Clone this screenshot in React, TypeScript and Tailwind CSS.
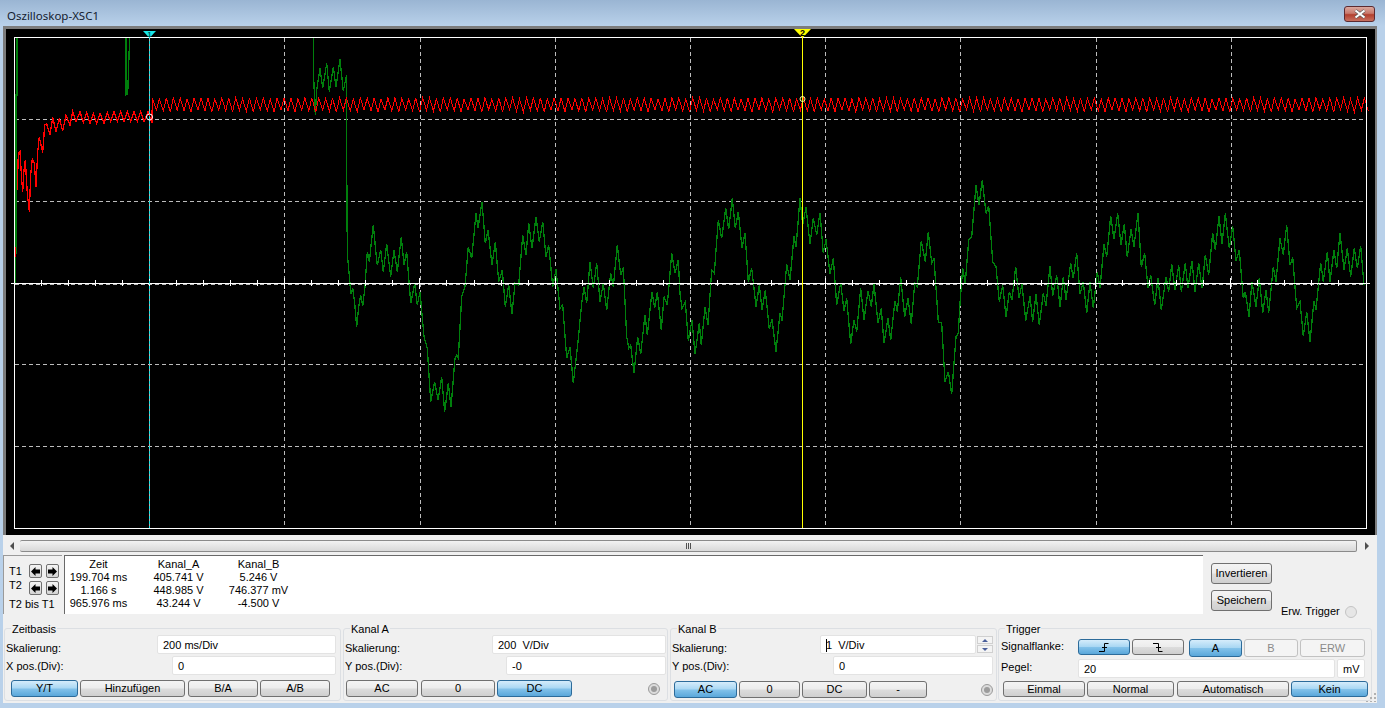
import type { ReactNode } from "react";

// Traced from the reference: "x,y" in 3x crop space, shifted back to page pixels.
function trace(src: string, ox: number, oy: number) {
  return src
    .trim()
    .split(/\s+/)
    .map((p) => {
      const [x, y] = p.split(",").map(Number);
      return `${(ox + x / 3).toFixed(1)},${(oy + y / 3).toFixed(1)}`;
    })
    .join(" ");
}

const greenStart = trace("51,112 51,285 48,285 48,740 46,850", 0, 0);
const greenBump = trace("378,112 378,285 383,282 388,140 388,112", 0, 0);
const greenMain = [
  trace("940,112 940,205 946,345 950,270 960,205 968,265 980,190 988,275 1000,200 1008,262 1020,178 1030,272 1040,225 1040,480 1042,760", 0, 0),
  trace("30,340 32,372 38,355 44,400 50,470 56,410 62,375 68,408 75,350 82,245 88,275 100,165 108,250 112,285 122,240 130,305 140,222 152,320 162,240 172,305 184,200 192,285 200,245 212,400 224,340 232,405 240,365 252,500 262,535 272,695 284,635 294,690 305,622 314,725 325,640 333,712 345,565 350,555 355,565 365,380 375,350 385,230 395,265 408,130 414,175 426,95 436,220 444,180 456,285 466,215 476,335 487,300 496,410 506,345 516,432 525,340 536,345 548,195 558,255 566,160 576,235 588,140 598,215 608,155 618,260 626,225 638,350 648,298 660,415 668,405 680,565 690,530 700,640 714,515 725,400 732,350 740,400 750,275 760,355 770,280 780,395 790,340 800,420 812,310 820,350 832,225 842,315 850,292 860,500 866,535 872,525 882,610 893,500 902,552 915,435 922,495 936,365 944,415 952,365 964,480 972,380 982,405 995,250 1005,310 1015,270", 340, 170),
  trace("0,370 6,415 16,395 25,512 36,450 45,552 58,460 64,525 75,412 84,465 95,300 103,310 115,150 125,205 137,115 146,178 157,85 166,175 175,125 186,235 195,188 205,335 215,295 228,410 238,345 246,420 256,360 268,478 276,447 288,545 300,428 306,452 320,282 330,330 342,198 348,232 360,85 368,165 378,112 390,222 400,145 410,195 420,128 430,250 438,208 450,312 460,265 470,405 482,338 492,422 500,385 512,522 522,450 530,485 542,355 552,450 564,362 574,410 582,342 594,460 604,415 612,520 624,445 632,510 645,392 652,425 662,322 674,440 684,385 694,462 704,340 712,350 724,212 736,275 745,185 755,280 762,265 775,455 785,460 795,635 805,605 815,672 828,500 835,490 840,400 848,295 856,340 866,210 875,200 888,45 897,105 907,30 918,130 926,108 938,275 948,290 958,395 968,345 978,442 988,365 996,390 1007,290 1017,385", 680, 170),
  trace("6,342 17,452 30,378 38,455 48,372 58,465 70,370 78,408 90,288 98,378 110,315 120,412 130,322 138,390 152,278 160,325 170,248 180,372 190,335 200,430 210,335 220,415 232,305 240,355 252,222 260,260 272,138 282,208 293,130 303,225 313,162 322,262 333,178 342,230 354,128 364,290 374,250 384,355 392,315 404,405 414,325 424,420 438,320 446,365 455,283 465,360 476,285 484,365 496,280 504,355 516,272 525,365 536,280 546,355 556,255 566,315 578,188 586,240 597,138 606,222 616,130 628,235 638,168 648,272 658,240 670,385 676,365 687,440 696,335 708,410 718,325 728,428 738,360 746,428 760,290 768,335 780,205 790,255 800,165 810,285 818,262 830,415 840,395 850,498 860,425 870,515 882,392 888,420 902,278 910,335 922,245 930,335 942,240 950,295 960,188 972,300 982,235 992,320 1003,235 1012,295 1022,228 1032,345", 1020, 170),
].join(" ");

const redStart = trace(
  "52,570 55,460 60,455 65,540 68,575 72,510 76,480 82,580 88,635 92,525 97,475 103,490 108,560 113,455 118,412 128,458 134,375 140,372 150,405 158,352 168,395 178,355 188,393 198,345 210,375 218,335 228,365 240,335 250,368 260,338 270,370 280,340 290,370 300,340 312,370 322,338 332,365 342,335 352,365 362,335 372,365 382,335 392,365 402,335 412,365 422,335 432,365 444,335 456,370 457,300",
  0,
  0,
);

// steady ripple once the red trace has settled
const redRipple: string[] = [];
for (let i = 0; i < 176; i++) {
  const x = 152.5 + i * 6.925;
  if (x > 1365) break;
  redRipple.push(`${x.toFixed(1)},${98 + (i % 4 === 1 ? 1 : 0)}`);
  redRipple.push(`${(x + 3.9).toFixed(1)},${110 + (i % 3)}`);
}

const gridX = [284.9, 420, 555.2, 690.4, 825.6, 960.7, 1096, 1231];
const gridY = [119.5, 201.5, 364.5, 446.5];
const tickX: number[] = [];
for (let i = 0; i <= 50; i++) tickX.push(14.5 + i * 27.03);

function Plot() {
  return (
    <svg viewBox="6 29 1369 506" width={1369} height={506} className="block bg-black">
      <g stroke="#bcbcbc" strokeWidth={1} strokeDasharray="4 3" shapeRendering="crispEdges">
        {gridX.map((x) => (
          <line key={x} x1={x} x2={x} y1={38} y2={528} />
        ))}
        {gridY.map((y) => (
          <line key={y} x1={15} x2={1366} y1={y} y2={y} />
        ))}
        <line x1={15} x2={1366} y1={284.5} y2={284.5} />
      </g>
      <line x1={149.5} x2={149.5} y1={38} y2={528} stroke="#c9a6a6" strokeWidth={1} shapeRendering="crispEdges" />
      <g fill="none" stroke="#007f0c" strokeWidth={1.3} shapeRendering="crispEdges">
        <polyline points={greenStart} />
        <polyline points={greenBump} />
        <polyline points={greenMain} />
      </g>
      <g fill="none" stroke="#ff0000" shapeRendering="crispEdges">
        <line x1={15.5} x2={15.5} y1={247} y2={257} />
        <polyline points={redStart} strokeWidth={1.3} />
        <polyline points={redRipple.join(" ")} strokeWidth={1} />
      </g>
      <g stroke="#ffffff" shapeRendering="crispEdges" fill="none">
        <rect x={14.5} y={37.5} width={1351.5} height={490.5} />
        <line x1={11} x2={1370} y1={283.5} y2={283.5} strokeWidth={1.5} />
        {tickX.map((x, i) => (
          <line key={x} x1={x} x2={x} y1={i % 5 === 0 ? 278 : 280} y2={i % 5 === 0 ? 289 : 286} />
        ))}
      </g>
      <line x1={149.5} x2={149.5} y1={36} y2={528} stroke="#19e6e6" strokeWidth={1} strokeDasharray="3 2" shapeRendering="crispEdges" />
      <line x1={802.5} x2={802.5} y1={36} y2={528} stroke="#ffff00" strokeWidth={1} shapeRendering="crispEdges" />
      <circle cx={149.5} cy={117} r={3} fill="none" stroke="#ffffff" />
      <circle cx={802.5} cy={99} r={2.5} fill="none" stroke="#ffff99" strokeWidth={1} />
      <polygon points="143,31 156,31 149.5,38" fill="#19e6e6" />
      <polygon points="794,29 811,29 802.5,38" fill="#ffff00" />
      <text x={149.5} y={36.5} textAnchor="middle" fontSize={7} fontWeight={700} fontFamily="Liberation Sans" fill="#004a4a">1</text>
      <text x={802.5} y={36} textAnchor="middle" fontSize={9} fontWeight={700} fontFamily="Liberation Sans" fill="#000000">2</text>
    </svg>
  );
}

const btnBase =
  "flex shrink-0 items-center justify-center rounded-[3px] border border-[#707070] text-[11px] leading-none text-black bg-[linear-gradient(#f4f4f4_0%,#ececec_48%,#dcdcdc_52%,#cfcfcf_100%)]";
const btnActive =
  "flex shrink-0 items-center justify-center rounded-[3px] border border-[#2c6b9a] text-[11px] leading-none text-black bg-[linear-gradient(#d5ecfb_0%,#a9d7f3_48%,#83c2ea_52%,#5aa7da_100%)]";
const btnOff =
  "flex shrink-0 items-center justify-center rounded-[3px] border border-[#c2c2c2] text-[11px] leading-none text-[#8a8a8a] bg-[#f4f4f4]";

function Btn({ className, active, off, children }: { className: string; active?: boolean; off?: boolean; children?: ReactNode }) {
  return <button className={`${active ? btnActive : off ? btnOff : btnBase} ${className}`}>{children}</button>;
}

function Field({ className, children }: { className: string; children?: ReactNode }) {
  return (
    <div className={`flex items-center rounded-[2px] border border-[#e3e3e3] bg-white pl-[5px] pt-[1px] text-[11px] ${className}`}>
      {children}
    </div>
  );
}

function Led({ className }: { className: string }) {
  return (
    <span className={`flex size-[12px] items-center justify-center rounded-full border border-[#9a9a9a] bg-[#dcdcdc] ${className}`}>
      <span className="size-[6px] rounded-full bg-[#9c9c9c]" />
    </span>
  );
}

function Group({ title, className, children }: { title: string; className: string; children: ReactNode }) {
  return (
    <fieldset className={`h-[79px] shrink-0 rounded-[3px] border border-[#dcdfe3] ${className}`}>
      <legend className="ml-[6px] translate-y-[1px] px-[1px] text-[11px] leading-[13px]">{title}</legend>
      {children}
    </fieldset>
  );
}

function NavBtn({ left }: { left?: boolean }) {
  return (
    <button className="flex h-[14px] w-[13px] items-center justify-center rounded-[2px] border border-[#707070] bg-[linear-gradient(#f4f4f4,#d4d4d4)]">
      <svg viewBox="0 0 9 9" width={9} height={9}>
        <path d={left ? "M0 4.5 4.5 0V2.5H9V6.5H4.5V9Z" : "M9 4.5 4.5 0V2.5H0V6.5H4.5V9Z"} fill="#000000" />
      </svg>
    </button>
  );
}

const readings = [
  ["Zeit", "Kanal_A", "Kanal_B"],
  ["199.704 ms", "405.741 V", "5.246 V"],
  ["1.166 s", "448.985 V", "746.377 mV"],
  ["965.976 ms", "43.244 V", "-4.500 V"],
];

export default function App() {
  return (
    <div className="relative flex h-[708px] w-[1385px] flex-col overflow-hidden bg-[#b9d1ea] font-['Liberation_Sans',sans-serif] text-[11px] text-black">
      {/* title bar */}
      <div className="flex h-[26px] shrink-0 items-start bg-[linear-gradient(#9ab5d3,#b9d1ea)] pl-[7px] pr-[10px]">
        <span className="mt-[8px] font-['Noto_Sans',sans-serif] text-[11.5px] leading-[15px] text-[#14202e]">Oszilloskop-XSC1</span>
        <button className="ml-auto mt-[6px] flex h-[16px] w-[31px] items-center justify-center rounded-[3px] border border-[#5c2a30] bg-[linear-gradient(#dba89f_0%,#c97a6d_45%,#b2402f_55%,#c8705f_100%)]">
          <svg viewBox="0 0 12 10" width={12} height={10}>
            <path d="M1.5 1.5 10.5 8.5M10.5 1.5 1.5 8.5" stroke="#555555" strokeWidth={3.4} />
            <path d="M1.5 1.5 10.5 8.5M10.5 1.5 1.5 8.5" stroke="#ffffff" strokeWidth={2.2} />
          </svg>
        </button>
      </div>

      <div className="ml-[3px] flex h-[677px] w-[1374px] shrink-0 flex-col bg-[#f0f0f0]">
        {/* scope screen */}
        <div className="border-l-[3px] border-r-[2px] border-t-[3px] border-[#7c7c7c]">
          <Plot />
        </div>

        {/* scroll bar */}
        <div className="mt-[5px] flex h-[12px] items-stretch">
          <div className="flex w-[17px] items-center justify-center">
            <span className="size-0 border-y-[4px] border-r-[4px] border-y-transparent border-r-[#505050]" />
          </div>
          <div className="flex w-[1337px] items-center justify-center gap-[1px] rounded-[2px] border-y border-r border-[#8a8a8a] bg-[linear-gradient(#f2f2f2,#d8d8d8)]">
            <span className="h-[6px] w-[1px] bg-[#505050]" />
            <span className="h-[6px] w-[1px] bg-[#505050]" />
            <span className="h-[6px] w-[1px] bg-[#505050]" />
          </div>
          <div className="flex w-[20px] items-center justify-center">
            <span className="size-0 border-y-[4px] border-l-[4px] border-y-transparent border-l-[#505050]" />
          </div>
        </div>

        {/* cursor readout */}
        <div className="mt-[3px] flex h-[59px]">
          <div className="flex w-[59px] flex-col border-l border-t border-[#9a9a9a] border-b-[#d8d8d8] border-r-[#d8d8d8] pl-[5px] pt-[8px]">
            <div className="flex h-[14px] items-center">
              <span className="w-[20px]">T1</span>
              <div className="flex gap-[4px]">
                <NavBtn left />
                <NavBtn />
              </div>
            </div>
            <div className="mt-[3px] flex h-[14px] items-center">
              <span className="mb-[5px] w-[20px]">T2</span>
              <div className="flex gap-[4px]">
                <NavBtn left />
                <NavBtn />
              </div>
            </div>
            <span className="mt-[3px] leading-[13px]">T2 bis T1</span>
          </div>

          <div className="ml-[2px] h-[59px] w-[1139px] border-l border-t border-[#696969] bg-white pt-[2px]">
            <div className="grid grid-cols-[67px_93px_67px] text-center leading-[13px]">
              {readings.flat().map((t, i) => (
                <span key={i}>{t}</span>
              ))}
            </div>
          </div>

          <div className="ml-[8px] flex w-[61px] flex-col gap-[6px] pt-[8px]">
            <Btn className="h-[21px] w-[61px]">Invertieren</Btn>
            <Btn className="h-[21px] w-[61px]">Speichern</Btn>
          </div>
          <div className="-mb-[4px] ml-[9px] flex items-end gap-[5px]">
            <span className="leading-[13px]">Erw. Trigger</span>
            <span className="size-[12px] rounded-full border border-[#c4c4c4] bg-[#e6e6e6]" />
          </div>
        </div>

        {/* settings */}
        <div className="mt-[8px] flex pl-[1px]">
          <Group title="Zeitbasis" className="w-[337px]">
            <div className="flex h-[19px] items-start pl-[1px] pr-[4px]">
              <span className="mt-[5px]">Skalierung:</span>
              <Field className="ml-auto h-[19px] w-[179px]">200 ms/Div</Field>
            </div>
            <div className="mt-[2px] flex h-[19px] items-center pl-[1px] pr-[4px]">
              <span className="mt-[1px]">X pos.(Div):</span>
              <Field className="ml-auto h-[19px] w-[164px]">0</Field>
            </div>
            <div className="mt-[5px] flex pl-[6px]">
              <Btn active className="h-[17px] w-[67px]">Y/T</Btn>
              <Btn className="ml-[2px] h-[17px] w-[105px]">Hinzufügen</Btn>
              <Btn className="ml-[3px] h-[17px] w-[70px]">B/A</Btn>
              <Btn className="ml-[2px] h-[17px] w-[70px]">A/B</Btn>
            </div>
          </Group>

          <Group title="Kanal A" className="ml-[2px] w-[325px]">
            <div className="flex h-[19px] items-start pl-[1px] pr-[1px]">
              <span className="mt-[5px]">Skalierung:</span>
              <Field className="ml-auto h-[19px] w-[174px]">200&nbsp; V/Div</Field>
            </div>
            <div className="mt-[2px] flex h-[19px] items-center pl-[1px] pr-[1px]">
              <span className="mt-[1px]">Y pos.(Div):</span>
              <Field className="ml-auto h-[19px] w-[160px]">-0</Field>
            </div>
            <div className="mt-[5px] flex items-center pl-[2px]">
              <Btn className="h-[17px] w-[72px]">AC</Btn>
              <Btn className="ml-[3px] h-[17px] w-[74px]">0</Btn>
              <Btn active className="ml-[2px] h-[17px] w-[75px]">DC</Btn>
              <Led className="ml-[76px]" />
            </div>
          </Group>

          <Group title="Kanal B" className="ml-[2px] w-[327px]">
            <div className="flex h-[19px] items-start pl-[1px] pr-[3px]">
              <span className="mt-[5px]">Skalierung:</span>
              <div className="ml-auto flex items-center gap-[1px]">
                <Field className="h-[19px] w-[156px] border-[#7eb4ea]">
                  <span className="mr-[-1px] h-[13px] w-[1px] bg-black" />
                  1&nbsp; V/Div
                </Field>
                <div className="flex w-[16px] flex-col gap-[1px]">
                  <span className="flex h-[8px] items-center justify-center border border-[#d0d0d0] bg-[#f4f4f4]">
                    <span className="size-0 border-x-[3px] border-b-[3px] border-x-transparent border-b-[#4a5f9a]" />
                  </span>
                  <span className="flex h-[8px] items-center justify-center border border-[#d0d0d0] bg-[#f4f4f4]">
                    <span className="size-0 border-x-[3px] border-t-[3px] border-x-transparent border-t-[#4a5f9a]" />
                  </span>
                </div>
              </div>
            </div>
            <div className="mt-[2px] flex h-[19px] items-center pl-[1px] pr-[3px]">
              <span className="mt-[1px]">Y pos.(Div):</span>
              <Field className="ml-auto h-[19px] w-[160px]">0</Field>
            </div>
            <div className="mt-[6px] flex items-center pl-[3px]">
              <Btn active className="h-[17px] w-[63px]">AC</Btn>
              <Btn className="ml-[2px] h-[17px] w-[61px]">0</Btn>
              <Btn className="ml-[2px] h-[17px] w-[65px]">DC</Btn>
              <Btn className="ml-[2px] h-[17px] w-[58px]">-</Btn>
              <Led className="ml-[54px]" />
            </div>
          </Group>

          <Group title="Trigger" className="ml-[1px] w-[374px]">
            <div className="flex items-start pl-[2px] pt-[4px]">
              <span className="mt-[1px] w-[77px] leading-[13px]">Signalflanke:</span>
              <Btn active className="h-[16px] w-[52px]">
                <svg viewBox="0 0 10 9" width={10} height={9}>
                  <path d="M0 8.5H5.5V.5H9.5M3 4.5H8" fill="none" stroke="#000000" />
                </svg>
              </Btn>
              <Btn className="ml-[2px] h-[16px] w-[52px]">
                <svg viewBox="0 0 10 9" width={10} height={9}>
                  <path d="M0 .5H5.5V8.5H9.5M3 4.5H8" fill="none" stroke="#000000" />
                </svg>
              </Btn>
              <Btn active className="ml-[5px] h-[18px] w-[53px]">A</Btn>
              <Btn off className="ml-[2px] h-[18px] w-[54px]">B</Btn>
              <Btn off className="ml-[2px] h-[18px] w-[65px]">ERW</Btn>
            </div>
            <div className="mt-[2px] flex h-[19px] items-center pl-[2px]">
              <span className="mb-[3px] w-[77px]">Pegel:</span>
              <Field className="h-[19px] w-[257px]">20</Field>
              <Field className="ml-[2px] h-[19px] w-[28px]">mV</Field>
            </div>
            <div className="mt-[3px] flex pl-[4px]">
              <Btn className="h-[16px] w-[82px]">Einmal</Btn>
              <Btn className="ml-[2px] h-[16px] w-[87px]">Normal</Btn>
              <Btn className="ml-[3px] h-[16px] w-[112px]">Automatisch</Btn>
              <Btn active className="ml-[2px] h-[16px] w-[77px]">Kein</Btn>
            </div>
          </Group>
        </div>
      </div>

      {/* resize grip */}
      <svg viewBox="0 0 12 12" width={12} height={12} className="absolute left-[1366px] top-[690px]">
        <path d="M8 3h2v2H8zM4 7h2v2H4zM8 7h2v2H8zM0 11h2v1H0zM4 11h2v1H4zM8 11h2v1H8z" fill="#b0b0b0" />
      </svg>
    </div>
  );
}
